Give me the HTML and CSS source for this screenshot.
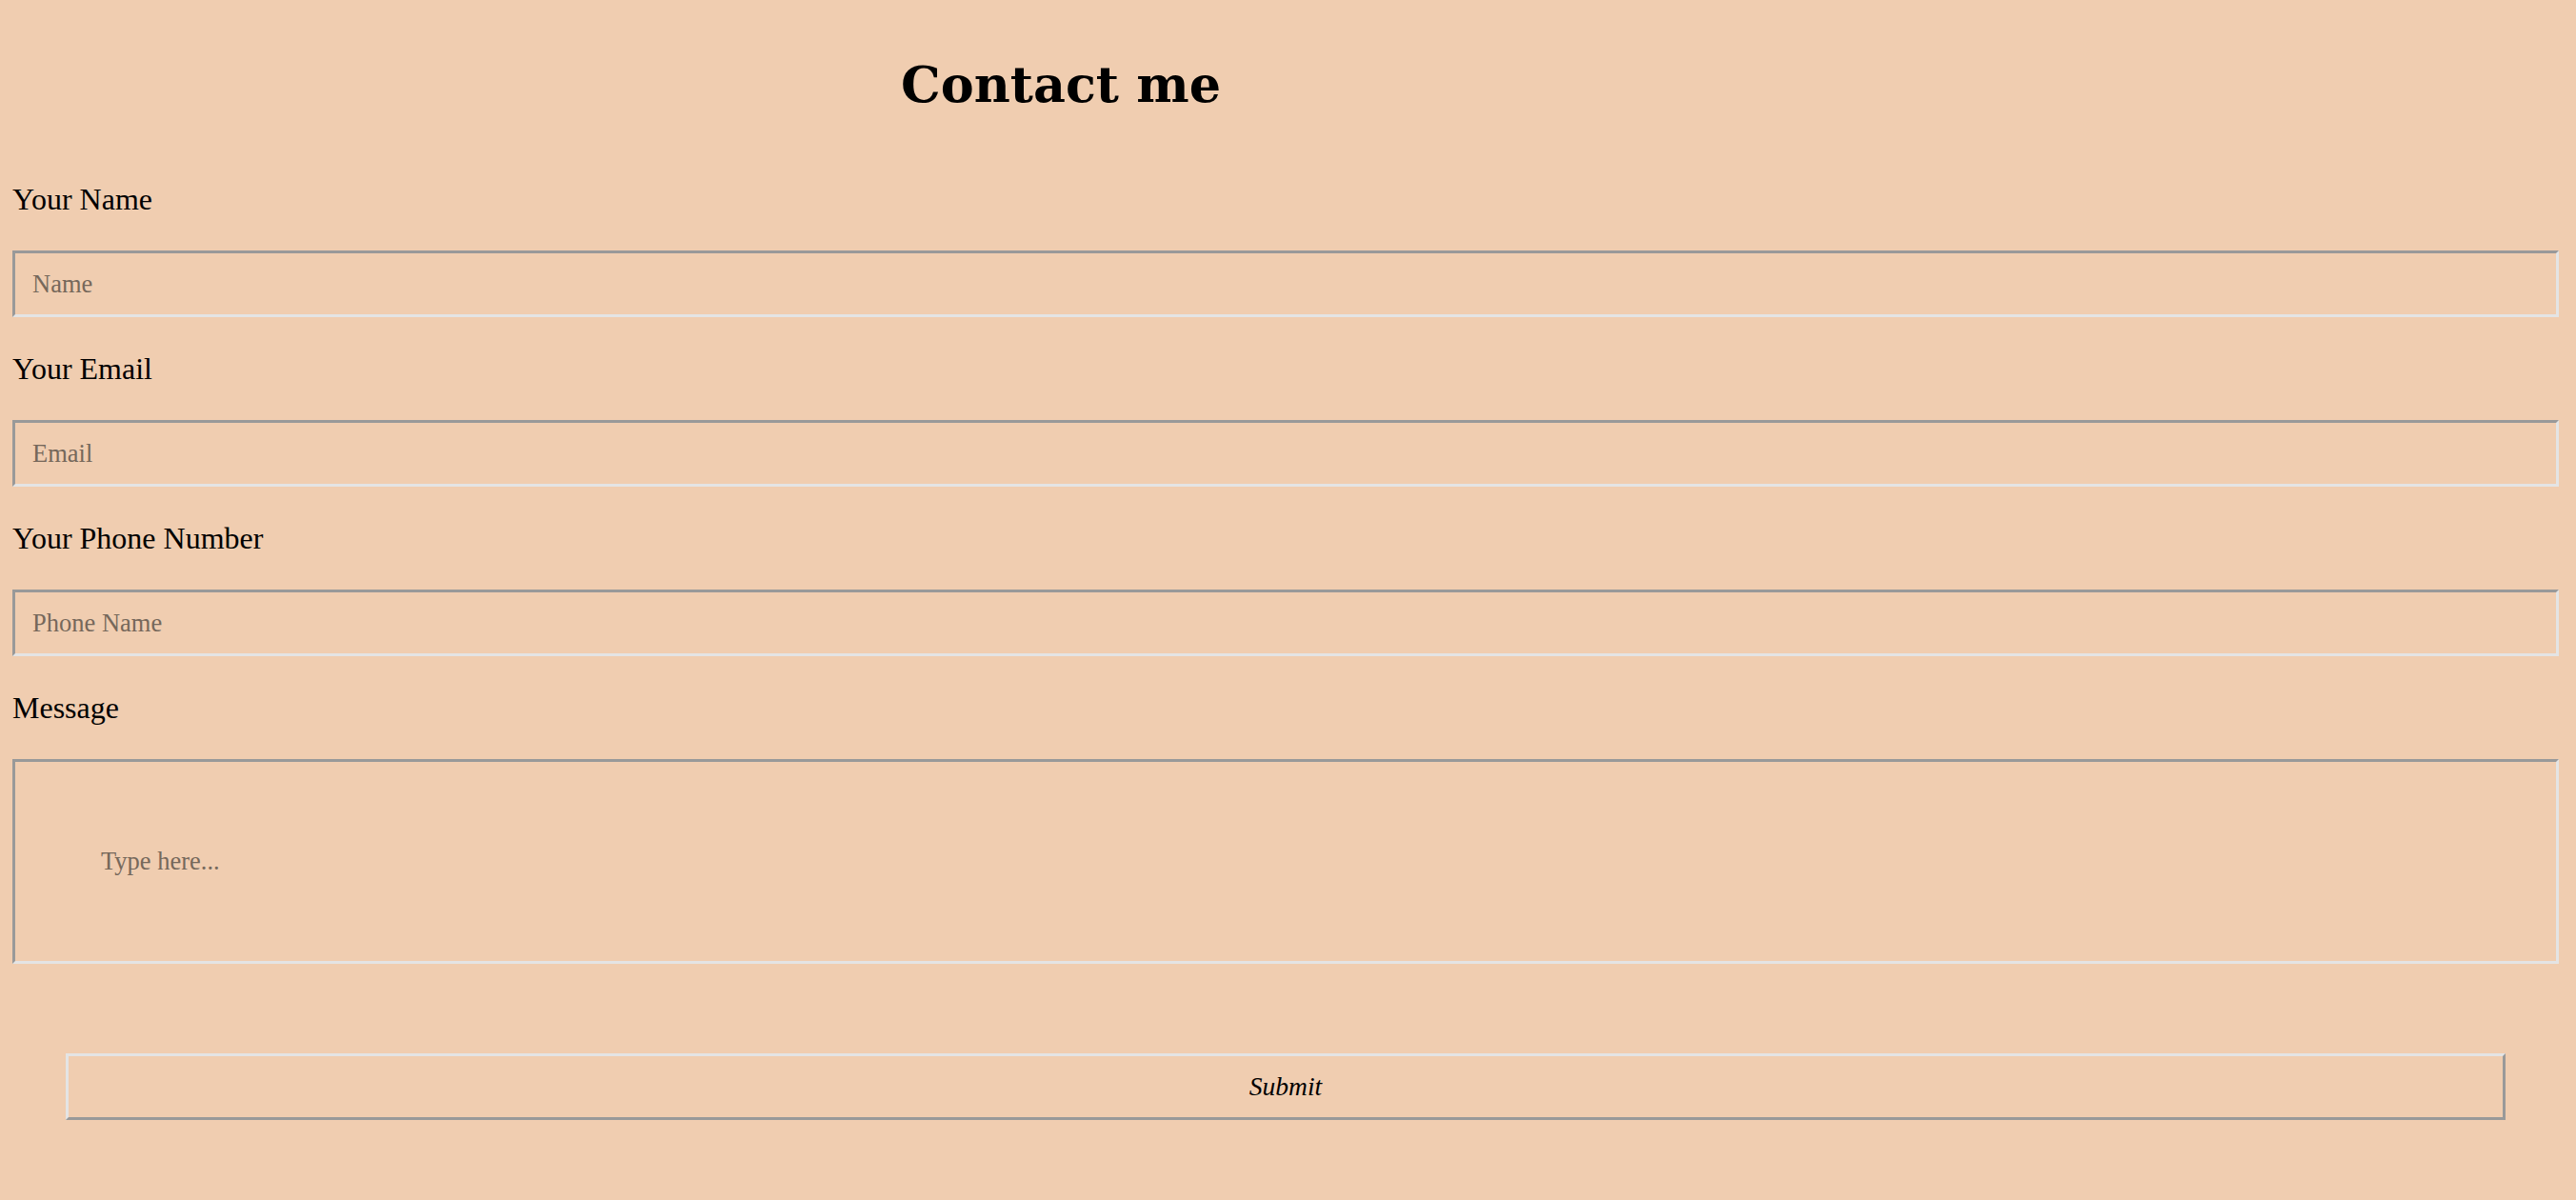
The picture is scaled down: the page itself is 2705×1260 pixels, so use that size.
FILE: index.html
```html
<!DOCTYPE html>
<html lang="en">
<head>
<meta charset="utf-8">
<title>Contact me</title>
<link rel="stylesheet" href="styles.css">
</head>
<body>
<main class="page">
  <h1 class="title">Contact me</h1>
  <form class="form">
    <label class="label" for="name">Your Name</label>
    <input class="field" id="name" type="text" placeholder="Name">
    <label class="label" for="email">Your Email</label>
    <input class="field" id="email" type="email" placeholder="Email">
    <label class="label" for="phone">Your Phone Number</label>
    <input class="field" id="phone" type="tel" placeholder="Phone Name">
    <label class="label" for="message">Message</label>
    <textarea class="area" id="message" placeholder="Type here..."></textarea>
    <button class="submit" type="submit">Submit</button>
  </form>
</main>
</body>
</html>
```
FILE: styles.css
```css
html {
  background: #f0cdb0;
}
body {
  margin: 0;
  background: #f0cdb0;
  font-family: "Liberation Serif", "Times New Roman", serif;
  color: #000;
}
.page {
  padding: 58px 18px 60px 13px;
}
.title {
  margin: 0 0 71px 0;
  padding-left: 933px;
  font-family: "DejaVu Serif", Georgia, serif;
  font-weight: 700;
  font-size: 52.4px;
  line-height: 62px;
}
.form {
  display: flex;
  flex-direction: column;
}
.label {
  display: block;
  font-size: 32px;
  line-height: 36px;
  margin-bottom: 36px;
}
.field,
.area {
  box-sizing: border-box;
  width: 100%;
  margin: 0 0 36px 0;
  background: transparent;
  border-style: solid;
  border-width: 3px;
  border-color: #999999 #e4e4e4 #e4e4e4 #999999;
  font-family: "Liberation Serif", "Times New Roman", serif;
  font-size: 26.5px;
  color: #000;
  outline: none;
}
.field {
  height: 70px;
  padding: 0 18px;
}
.area {
  display: block;
  height: 215px;
  padding: 89px 90px;
  margin-bottom: 0;
  resize: none;
  line-height: 30px;
}
.field::placeholder,
.area::placeholder {
  color: #76685b;
  opacity: 1;
}
.submit {
  box-sizing: border-box;
  height: 70px;
  margin: 94px 56px 0 56px;
  background: transparent;
  border-style: solid;
  border-width: 3px;
  border-color: #e4e4e4 #999999 #999999 #e4e4e4;
  font-family: "Liberation Serif", "Times New Roman", serif;
  font-style: italic;
  font-size: 27.5px;
  color: #000;
  padding: 0;
}
```
